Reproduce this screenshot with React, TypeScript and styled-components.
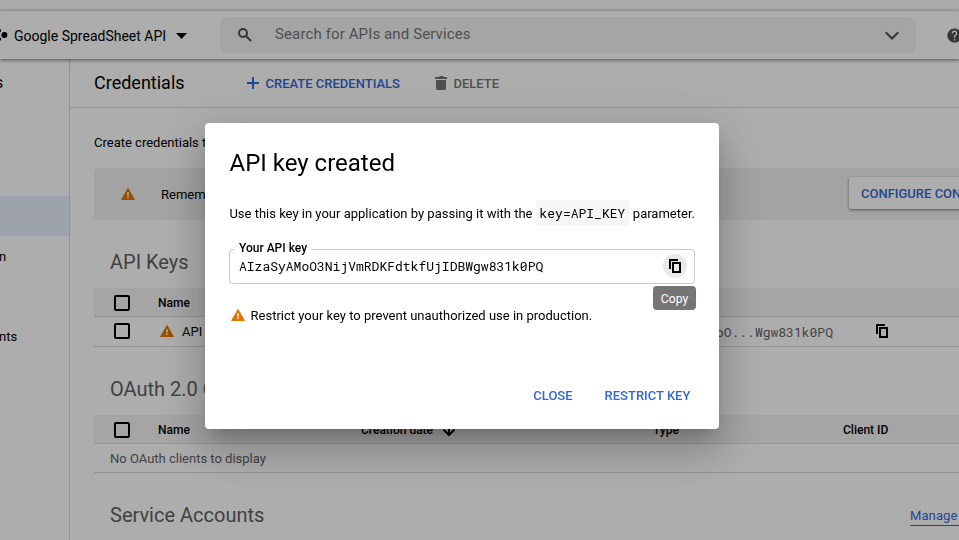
import React from "react";
import styled, { createGlobalStyle } from "styled-components";

const GlobalStyle = createGlobalStyle`
  *, *::before, *::after { box-sizing: border-box; }
  html, body { margin: 0; height: 100%; overflow: hidden; }
  body {
    background: #fff;
    color: #000;
    font-family: Roboto, "Liberation Sans", sans-serif;
    font-size: 13px;
    line-height: 20px;
  }
  button { font: inherit; border: 0; padding: 0; background: none; white-space: nowrap; }
  svg { display: block; flex: none; }
`;

const Page = styled.div`
  display: flex;
  flex-direction: column;
  width: 959px;
  height: 540px;
  overflow: hidden;
  white-space: nowrap;
`;

const TopStrip = styled.div`
  flex: none;
  height: 11px;
  background: #fbfbfb;
  border-bottom: 1px solid #f1f1f1;
`;

const Header = styled.header`
  position: relative;
  z-index: 1;
  display: flex;
  align-items: center;
  flex: none;
  height: 48px;
  background: #fff;
  box-shadow: 0 1px 4px rgba(0, 0, 0, 0.55);
`;

const ProjectPicker = styled.button`
  display: flex;
  align-items: center;
  flex: none;
  gap: 6px;
  width: 220px;
  padding-top: 2px;
  font-size: 14px;
  color: #000;
`;

const PickerArrow = styled.svg`
  margin-left: 4px;
`;

const SearchBox = styled.div`
  display: flex;
  align-items: center;
  flex: none;
  width: 696px;
  height: 36px;
  padding: 0 16px 0 17px;
  border-radius: 8px;
  background: #f3f3f3;
`;

const SearchHint = styled.span`
  flex: 1;
  margin-left: 22px;
  padding-bottom: 2px;
  font-size: 15px;
  letter-spacing: 0.12px;
  color: #757575;
`;

const HelpIcon = styled.svg`
  margin-left: 30px;
`;

const Body = styled.div`
  display: flex;
  flex: 1;
  min-height: 0;
`;

const Sidebar = styled.nav`
  display: flex;
  flex-direction: column;
  flex: none;
  width: 70px;
  border-right: 1px solid #dadada;
`;

const SidebarTitle = styled.div`
  height: 49px;
  padding-top: 14px;
  font-size: 16px;
  text-indent: -5px;
`;

const SidebarItem = styled.div<{ $selected?: boolean }>`
  height: 40px;
  line-height: 42px;
  text-indent: -1px;
  background: ${(p) => (p.$selected ? "#e8effe" : "transparent")};
`;

const SidebarGap = styled.div<{ $height: number }>`
  height: ${(p) => p.$height}px;
`;

const Content = styled.main`
  flex: 1;
  min-width: 0;
`;

const Toolbar = styled.div`
  display: flex;
  align-items: center;
  height: 49px;
  padding-left: 24px;
  border-bottom: 1px solid #dadada;
`;

const PageTitle = styled.h1`
  width: 150px;
  margin: 0;
  font-size: 18px;
  font-weight: 400;
`;

const ToolbarButton = styled.button<{ $muted?: boolean; $width: number }>`
  display: flex;
  align-items: center;
  gap: 5px;
  width: ${(p) => p.$width}px;
  font-weight: 500;
  color: ${(p) => (p.$muted ? "#757575" : "#3367d6")};
`;

const ButtonLabel = styled.span`
  padding: 2px 0 0 0.5px;
`;

const Sections = styled.div`
  padding-left: 24px;
`;

const Intro = styled.p`
  height: 60px;
  margin: 0;
  padding-top: 25px;
`;

const Banner = styled.div`
  display: flex;
  align-items: center;
  height: 52px;
  padding-left: 27px;
  border-radius: 4px 0 0 4px;
  background: #f1f1f1;
`;

const BannerText = styled.span`
  flex: none;
  width: 688px;
  margin-left: 26px;
  padding-top: 2px;
`;

const ConsentButton = styled.button`
  flex: none;
  height: 32px;
  width: 210px;
  margin-top: -2px;
  padding: 2px 0 0 12px;
  border-radius: 3px;
  background: #fff;
  box-shadow: 0 1px 3px rgba(0, 0, 0, 0.5);
  color: #3367d6;
  font-weight: 500;
  text-align: left;
`;

const SectionTitle = styled.div<{ $height: number; $top: number }>`
  display: flex;
  justify-content: space-between;
  height: ${(p) => p.$height}px;
  padding: ${(p) => p.$top}px 0 0 16px;
  color: #616161;
`;

const SectionName = styled.h2`
  margin: 0;
  font-size: 20px;
  line-height: 24px;
  font-weight: 400;
`;

const ManageLink = styled.a`
  width: 49px;
  height: 18px;
  margin-top: 5px;
  border-bottom: 1px solid #3367d6;
  color: #3367d6;
  font-size: 13px;
  line-height: 16px;
  letter-spacing: 0.1px;
`;

const Row = styled.div<{ $head?: boolean; $height: number }>`
  display: grid;
  grid-template-columns: 64px 203px 292px 190px 1fr;
  align-items: center;
  height: ${(p) => p.$height}px;
  border-bottom: 1px solid #dadada;
  background: ${(p) => (p.$head ? "#f3f3f3" : "transparent")};
  font-size: ${(p) => (p.$head ? 12 : 13)}px;
  font-weight: ${(p) => (p.$head ? 500 : 400)};
  line-height: 16px;
`;

const KeyRow = styled(Row)`
  grid-template-columns: 64px 484px 234px 1fr;
  padding-bottom: 1px;
`;

const Checkbox = styled.span<{ $lowered?: boolean }>`
  width: 16px;
  height: 16px;
  margin: ${(p) => (p.$lowered ? "2px" : 0)} 0 0 20px;
  border: 2px solid #000;
  border-radius: 2px;
`;

const Cell = styled.span`
  display: flex;
  align-items: center;
  gap: 8px;
`;

const HeadCell = styled(Cell)`
  padding-top: 2px;
`;

const KeyName = styled.span`
  padding-top: 2px;
`;

const KeyPreview = styled.span`
  padding: 1px 0 0 11.5px;
  font-family: "Roboto Mono", "DejaVu Sans Mono", monospace;
  color: #616161;
`;

const EmptyRow = styled.div`
  height: 29px;
  padding-left: 16px;
  border-bottom: 1px solid #dadada;
  line-height: 30px;
  color: #616161;
`;

const Backdrop = styled.div`
  position: fixed;
  inset: 0;
  z-index: 5;
  padding: 123px 0 0 205px;
  background: rgba(0, 0, 0, 0.32);
`;

const Dialog = styled.section`
  display: flex;
  flex-direction: column;
  width: 514px;
  height: 306px;
  padding: 24px;
  border-radius: 4px;
  background: #fff;
  box-shadow: 0 11px 15px -7px rgba(0, 0, 0, 0.2), 0 24px 38px 3px rgba(0, 0, 0, 0.14),
    0 9px 46px 8px rgba(0, 0, 0, 0.12);
  white-space: nowrap;
`;

const DialogTitle = styled.h2`
  height: 53px;
  margin: 0;
  padding-left: 0.5px;
  font-size: 24px;
  line-height: 32px;
  font-weight: 400;
`;

const Usage = styled.p`
  display: flex;
  height: 26px;
  margin: 0;
  padding-left: 0.4px;
  line-height: 28px;
`;

const Code = styled.code`
  height: 26px;
  margin: 0 3.5px 0 3px;
  padding: 0 4px;
  background: #f6f6f6;
  font-family: "Roboto Mono", "DejaVu Sans Mono", monospace;
  font-size: 13px;
  line-height: 27px;
`;

const KeyField = styled.fieldset`
  display: flex;
  align-items: flex-start;
  justify-content: space-between;
  width: 466px;
  height: 43px;
  margin: 15px 0 0;
  padding: 0 7px 0 9px;
  border: 1px solid #c9c9c9;
  border-radius: 4px;
`;

const KeyLabel = styled.legend`
  height: 17px;
  margin-left: -5px;
  padding: 0 4px 0 5px;
  font-size: 12px;
  line-height: 14px;
  font-weight: 500;
`;

const KeyValue = styled.span`
  margin-top: -2px;
  font-family: "Roboto Mono", "DejaVu Sans Mono", monospace;
  font-size: 13px;
`;

const CopyButton = styled.button`
  position: relative;
  display: grid;
  place-items: center;
  width: 24px;
  height: 24px;
  margin-top: -4px;
  border-radius: 50%;
  background: #e9e9e9;
`;

const Tooltip = styled.span`
  position: absolute;
  top: 32px;
  right: -9px;
  height: 24px;
  width: 43px;
  border-radius: 4px;
  background: #757575;
  color: #fff;
  font-size: 12px;
  line-height: 26px;
  letter-spacing: 0.1px;
  text-align: center;
`;

const Advice = styled.p`
  display: flex;
  gap: 5.6px;
  height: 20px;
  margin: 22px 0 0;
  padding-left: 2px;
`;

const AdviceIcon = styled.span`
  padding-top: 3px;
`;

const Actions = styled.div`
  display: flex;
  justify-content: flex-end;
  gap: 32px;
  margin: auto 0 -1px;
  padding: 0 4.6px 0 0;
`;

const ActionButton = styled.button`
  color: #3367d6;
  font-weight: 500;
`;

const WarningIcon = () => (
  <svg width="14" height="12" viewBox="0 0 14 12">
    <path d="M7 0.6L13.4 11.5H0.6Z" fill="#e37400" stroke="#e37400" strokeLinejoin="round" />
    <path d="M6.2 4.2h1.6v3.4H6.2zM6.2 8.6h1.6v1.5H6.2z" fill="#fff" />
  </svg>
);

const CopyIcon = () => (
  <svg width="12" height="14" viewBox="0 0 12 14">
    <path d="M9 1H1V10" fill="none" stroke="#000" strokeWidth="2" />
    <path d="M4 4H11V13H4Z" fill="none" stroke="#000" strokeWidth="2" />
  </svg>
);

const RowWarning = styled.span`
  padding-left: 2px;
`;

export default function App() {
  return (
    <>
      <GlobalStyle />
      <Page>
        <TopStrip />
        <Header>
          <ProjectPicker>
            <svg width="8" height="14" viewBox="0 0 8 14">
              <circle cx="4.4" cy="6" r="3" />
              <circle cx="-0.8" cy="1.8" r="1.8" />
              <circle cx="-0.8" cy="10.2" r="1.8" />
            </svg>
            Google SpreadSheet API
            <PickerArrow width="11" height="6" viewBox="0 0 11 6">
              <path d="M0 0H11L5.5 6Z" />
            </PickerArrow>
          </ProjectPicker>
          <SearchBox>
            <svg width="16" height="16" viewBox="0 0 16 16" fill="none" stroke="#505050" strokeWidth="2">
              <circle cx="6" cy="6" r="4" />
              <path d="M9 9L14 14" />
            </svg>
            <SearchHint>Search for APIs and Services</SearchHint>
            <svg width="15" height="10" viewBox="0 0 15 10" fill="none" stroke="#505050" strokeWidth="2">
              <path d="M0.7 2.2L7 8.5L13.3 2.2" />
            </svg>
          </SearchBox>
          <HelpIcon width="17" height="17" viewBox="0 0 24 24" fill="#505050">
            <path d="M12 2C6.48 2 2 6.48 2 12s4.48 10 10 10 10-4.48 10-10S17.52 2 12 2zm1 17h-2v-2h2v2zm2.07-7.75l-.9.92C13.45 12.9 13 13.5 13 15h-2v-.5c0-1.1.45-2.1 1.17-2.83l1.24-1.26c.37-.36.59-.86.59-1.41 0-1.1-.9-2-2-2s-2 .9-2 2H8c0-2.21 1.79-4 4-4s4 1.79 4 4c0 .88-.36 1.68-.93 2.25z" />
          </HelpIcon>
        </Header>
        <Body>
          <Sidebar>
            <SidebarTitle>s</SidebarTitle>
            <SidebarGap $height={88} />
            <SidebarItem $selected />
            <SidebarItem>n</SidebarItem>
            <SidebarGap $height={40} />
            <SidebarItem>nts</SidebarItem>
          </Sidebar>
          <Content>
            <Toolbar>
              <PageTitle>Credentials</PageTitle>
              <ToolbarButton $width={190}>
                <svg width="16" height="12" viewBox="0 0 16 12" fill="none" stroke="#3367d6" strokeWidth="2">
                  <path d="M9 0V12M3 6H15" />
                </svg>
                <ButtonLabel>CREATE CREDENTIALS</ButtonLabel>
              </ToolbarButton>
              <ToolbarButton $muted $width={80}>
                <svg width="14" height="14" viewBox="0 0 14 14" fill="#757575">
                  <path d="M1 1H5L6 0H9L10 1H13V3H1ZM2 4H12V12.5Q12 14 10.5 14H3.5Q2 14 2 12.5Z" />
                </svg>
                <ButtonLabel>DELETE</ButtonLabel>
              </ToolbarButton>
            </Toolbar>
            <Sections>
              <Intro>Create credentials to access your enabled APIs</Intro>
              <Banner>
                <WarningIcon />
                <BannerText>Remember to configure the OAuth consent screen</BannerText>
                <ConsentButton>CONFIGURE CONSENT SCREEN</ConsentButton>
              </Banner>
              <SectionTitle $height={68} $top={30}>
                <SectionName>API Keys</SectionName>
              </SectionTitle>
              <Row $head $height={29}>
                <Checkbox $lowered />
                <HeadCell>Name</HeadCell>
              </Row>
              <KeyRow $height={30}>
                <Checkbox />
                <Cell>
                  <RowWarning>
                    <WarningIcon />
                  </RowWarning>
                  <KeyName>API key 1</KeyName>
                </Cell>
                <KeyPreview>AIzaSyAMoO...Wgw831k0PQ</KeyPreview>
                <CopyIcon />
              </KeyRow>
              <SectionTitle $height={68} $top={30}>
                <SectionName>OAuth 2.0 Client IDs</SectionName>
              </SectionTitle>
              <Row $head $height={29}>
                <Checkbox $lowered />
                <HeadCell>Name</HeadCell>
                <HeadCell>
                  Creation date
                  <svg width="16" height="14" viewBox="0 0 16 14" fill="none" stroke="#000" strokeWidth="2">
                    <path d="M8 0V12M2.5 6.5L8 12L13.5 6.5" />
                  </svg>
                </HeadCell>
                <HeadCell>Type</HeadCell>
                <HeadCell>Client ID</HeadCell>
              </Row>
              <EmptyRow>No OAuth clients to display</EmptyRow>
              <SectionTitle $height={67} $top={30}>
                <SectionName>Service Accounts</SectionName>
                <ManageLink>Manage</ManageLink>
              </SectionTitle>
            </Sections>
          </Content>
        </Body>
      </Page>
      <Backdrop>
        <Dialog>
          <DialogTitle>API key created</DialogTitle>
          <Usage>
            Use this key in your application by passing it with the
            <Code>key=API_KEY</Code>
            parameter.
          </Usage>
          <KeyField>
            <KeyLabel>Your API key</KeyLabel>
            <KeyValue>AIzaSyAMoO3NijVmRDKFdtkfUjIDBWgw831k0PQ</KeyValue>
            <CopyButton>
              <CopyIcon />
              <Tooltip>Copy</Tooltip>
            </CopyButton>
          </KeyField>
          <Advice>
            <AdviceIcon>
              <WarningIcon />
            </AdviceIcon>
            Restrict your key to prevent unauthorized use in production.
          </Advice>
          <Actions>
            <ActionButton>CLOSE</ActionButton>
            <ActionButton>RESTRICT KEY</ActionButton>
          </Actions>
        </Dialog>
      </Backdrop>
    </>
  );
}
